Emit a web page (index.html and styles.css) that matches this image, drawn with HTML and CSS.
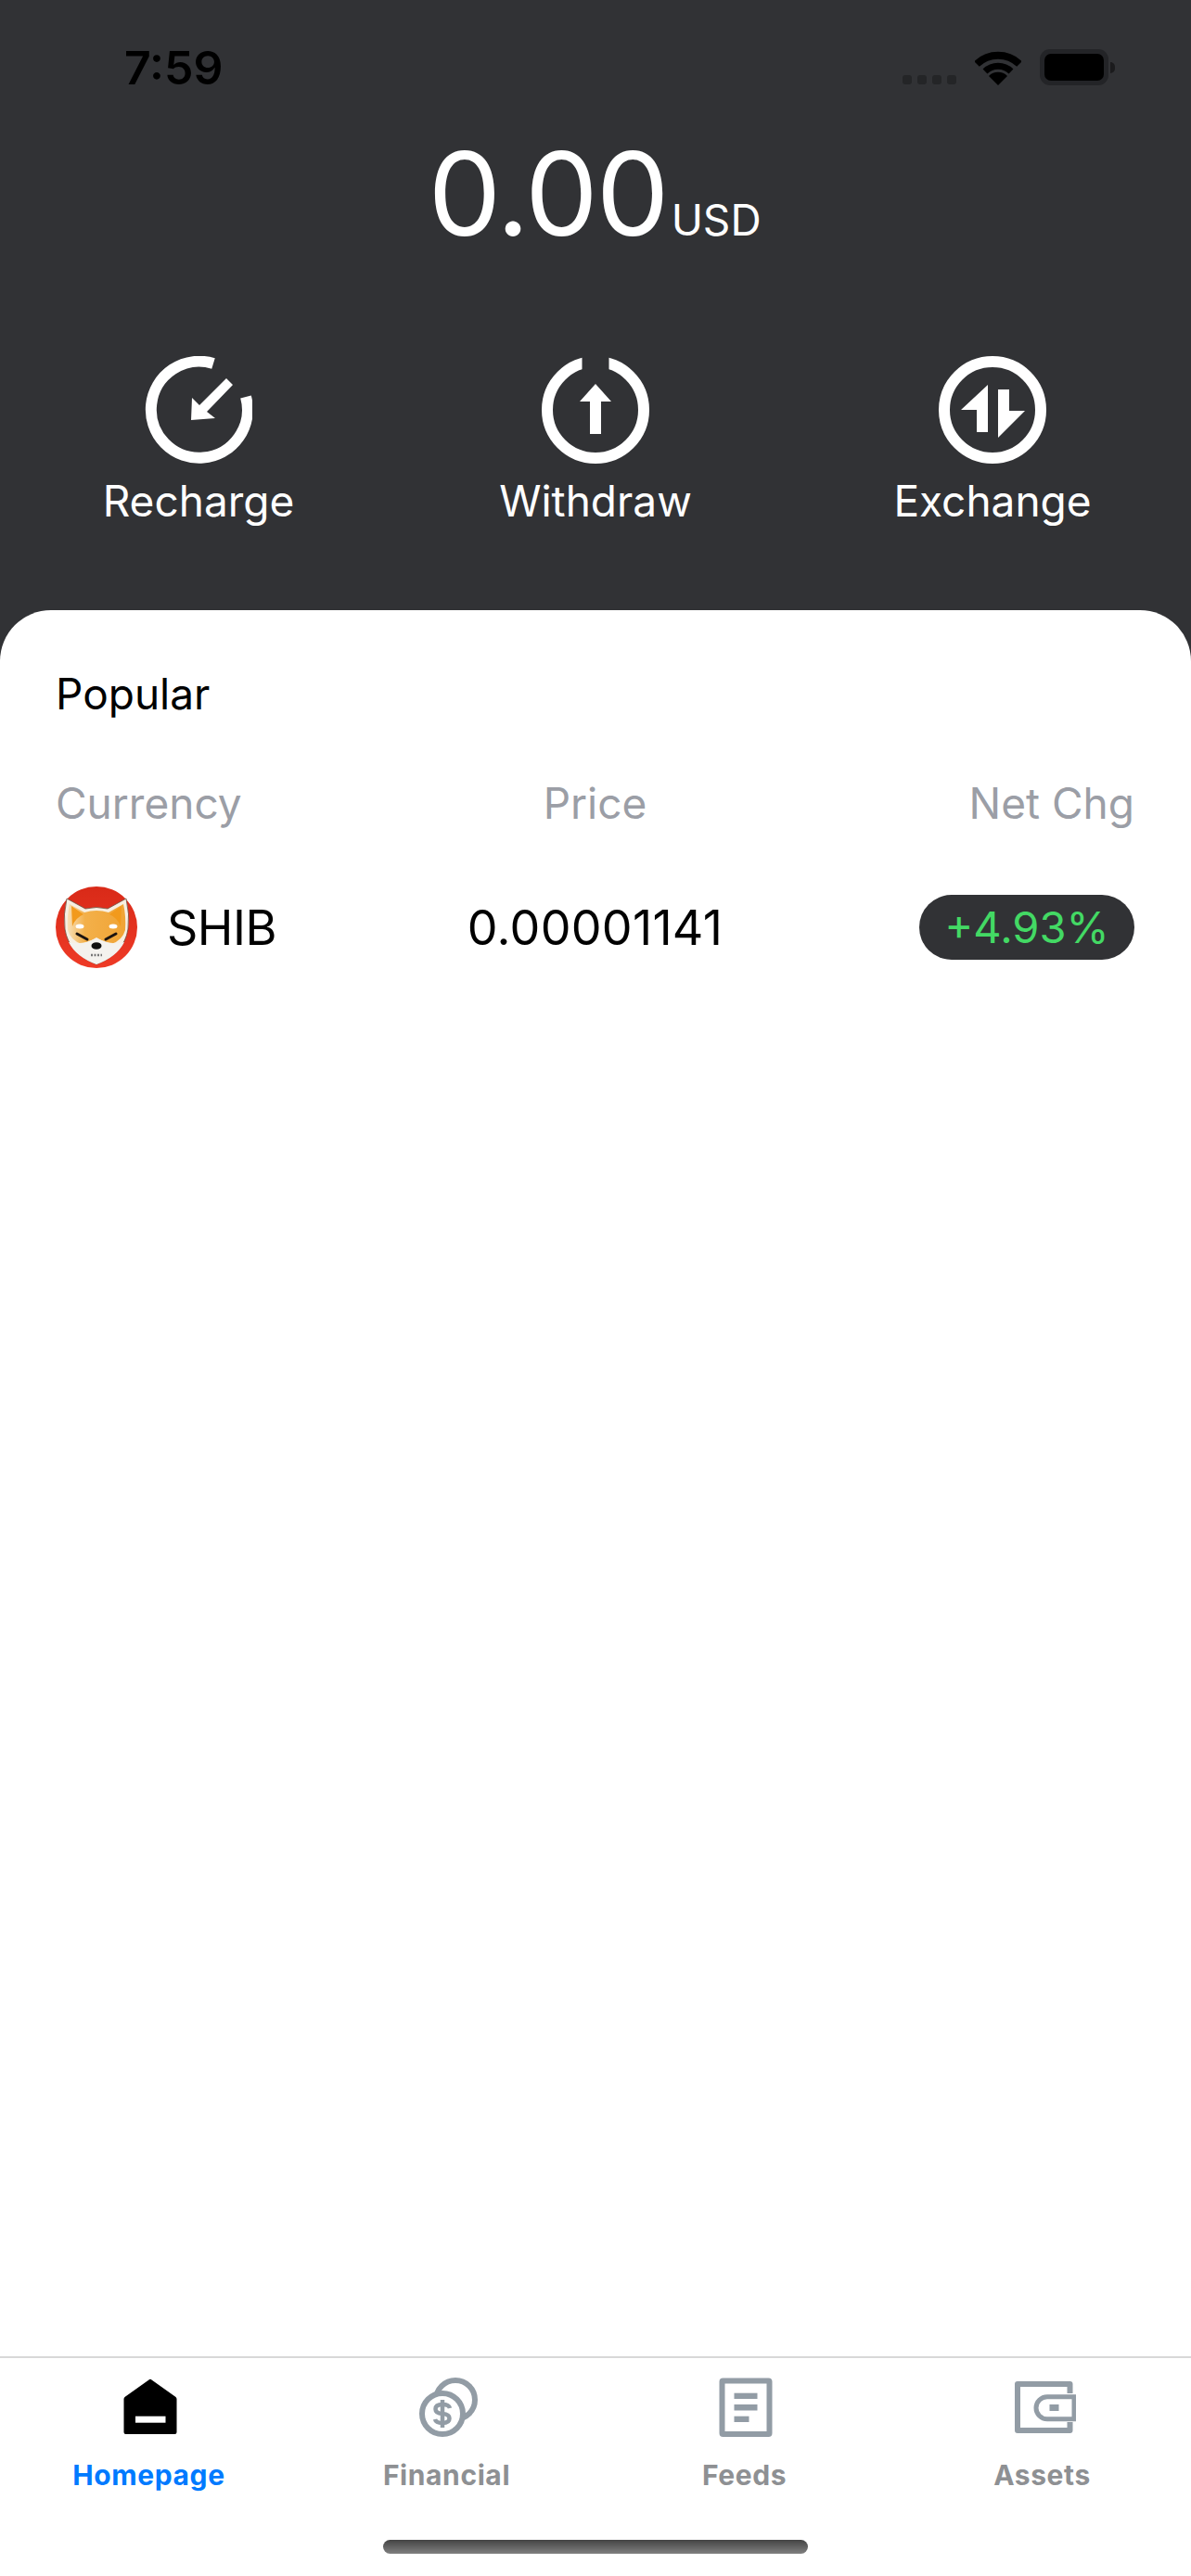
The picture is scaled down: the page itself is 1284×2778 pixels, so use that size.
FILE: index.html
```html
<!DOCTYPE html>
<html lang="en">
<head>
    <meta charset="UTF-8">
    <meta name="viewport" content="width=device-width, initial-scale=1.0">
    <link rel="stylesheet" href="styles.css">
    <title>Homepage</title>
</head>
<body>

    <div id="app">
        <div class="status-bar">
            <span class="time">7:59</span>
            <div class="status-icons">
                <div class="signal"><i></i><i></i><i></i><i></i></div>
                <svg class="wifi" width="50" height="37" viewBox="0 0 50 37">
                    <path d="M2 14A33 33 0 0 1 48 14" fill="none" stroke="#000" stroke-width="8"/>
                    <path d="M11 22A20 20 0 0 1 39 22" fill="none" stroke="#000" stroke-width="7"/>
                    <path d="M25 37L15 27A14 14 0 0 1 35 27Z" fill="#000"/>
                </svg>
                <div class="battery"><div class="battery-level"></div></div>
                <div class="battery-cap"></div>
            </div>
        </div>

        <div class="balance">
            <span class="amount">0.00</span><span class="unit">USD</span>
        </div>

        <div class="actions">
            <div class="action">
                <svg width="116" height="116" viewBox="0 0 116 116">
                    <path d="M109 44A52 52 0 1 1 74 8" fill="none" stroke="#fff" stroke-width="12"/>
                    <path d="M50 69L51 45L59 53L88 24L95 31L67 60L76 67Z" fill="#fff"/>
                </svg>
                <span>Recharge</span>
            </div>
            <div class="action">
                <svg width="116" height="116" viewBox="0 0 116 116">
                    <circle cx="58" cy="58" r="52" fill="none" stroke="#fff" stroke-width="12"/>
                    <rect x="43.5" y="0" width="29" height="20" fill="#313235"/>
                    <path d="M58 30L75 49H64V84H52V49H41Z" fill="#fff"/>
                </svg>
                <span>Withdraw</span>
            </div>
            <div class="action">
                <svg width="116" height="116" viewBox="0 0 116 116">
                    <circle cx="58" cy="58" r="52" fill="none" stroke="#fff" stroke-width="12"/>
                    <path d="M53 31V82H41V58H24Z" fill="#fff"/>
                    <path d="M64 36H76V59H93L64 88Z" fill="#fff"/>
                </svg>
                <span>Exchange</span>
            </div>
        </div>

        <div class="sheet">
            <div class="market">
                <h2>Popular</h2>
                <div class="market-head">
                    <span>Currency</span>
                    <span>Price</span>
                    <span>Net Chg</span>
                </div>
                <div class="market-row">
                    <div class="coin">
                        <svg width="88" height="88" viewBox="0 0 88 88">
                            <defs>
                                <linearGradient id="faceFill" x1="0" x2="1" y1="0" y2="0">
                                    <stop offset="0" stop-color="#f8e0b8"/>
                                    <stop offset="0.3" stop-color="#f3b04a"/>
                                    <stop offset="1" stop-color="#f0a435"/>
                                </linearGradient>
                                <linearGradient id="coinFill" x1="0" x2="0" y1="0" y2="1">
                                    <stop offset="0" stop-color="#d92a18"/>
                                    <stop offset="1" stop-color="#ee3a26"/>
                                </linearGradient>
                            </defs>
                            <circle cx="44" cy="44" r="44" fill="url(#coinFill)"/>
                            <path d="M12 13L32 24Q44 21 56 24L76 13Q80 30 78 46Q74 72 44 84Q14 72 10 46Q8 30 12 13Z" fill="#f7efe2" stroke="#6b5242" stroke-width="0.8"/>
                            <path d="M15 19L31 28Q44 24 57 28L73 19Q76 32 75 47Q72 58 60 62L44 56L28 62Q16 58 13 47Q12 32 15 19Z" fill="url(#faceFill)"/>
                            <path d="M14 60Q30 64 44 55Q58 64 74 60Q66 76 44 84Q22 76 14 60Z" fill="#f4f2ee"/>
                            <path d="M17 21L30 30Q21 34 18 43Z" fill="#f29a1c"/>
                            <path d="M71 21L58 30Q67 34 70 43Z" fill="#f29a1c"/>
                            <ellipse cx="26" cy="43" rx="4.500" ry="2.500" fill="#fff"/>
                            <ellipse cx="62" cy="43" rx="4.500" ry="2.500" fill="#fff"/>
                            <path d="M23 51L34 57" stroke="#1c1410" stroke-width="3" stroke-linecap="round"/>
                            <path d="M65 51L54 57" stroke="#1c1410" stroke-width="3" stroke-linecap="round"/>
                            <ellipse cx="44" cy="64" rx="5.500" ry="3.800" fill="#111"/>
                            <path d="M38 74H50" stroke="#777" stroke-width="2.500" stroke-dasharray="2 1.500"/>
                        </svg>
                        <span class="coin-name">SHIB</span>
                    </div>
                    <div class="price">0.00001141</div>
                    <div class="change-cell"><span class="change">+4.93%</span></div>
                </div>
            </div>

            <div class="tab-bar">
                <div class="tab active">
                    <svg width="72" height="72" viewBox="0 0 72 72">
                        <path d="M35.500 6.500a2 2 0 0 1 3 0L64.500 25a3 3 0 0 1 1 2V63a2 2 0 0 1-2 2H10.500a2 2 0 0 1-2-2V27a3 3 0 0 1 1-2Z" fill="#000"/>
                        <rect x="21" y="45.700" width="32.500" height="7" fill="#fff"/>
                    </svg>
                    <span>Homepage</span>
                </div>
                <div class="tab">
                    <svg width="72" height="72" viewBox="0 0 72 72">
                        <circle cx="45" cy="28" r="21" fill="none" stroke="#929ca5" stroke-width="6"/>
                        <circle cx="31" cy="43" r="22" fill="#fff" stroke="#929ca5" stroke-width="6"/>
                        <path d="M39 37Q38 33 31 33Q23.500 33 23.500 38Q23.500 42.500 31 43Q38.500 43.500 38.500 48Q38.500 53 31 53Q24 53 23 49" fill="none" stroke="#929ca5" stroke-width="4.500"/>
                        <path d="M31 28V58" stroke="#929ca5" stroke-width="4.500"/>
                    </svg>
                    <span>Financial</span>
                </div>
                <div class="tab">
                    <svg width="72" height="72" viewBox="0 0 72 72">
                        <rect x="11.500" y="7.500" width="51" height="57.500" rx="1" fill="none" stroke="#929ca5" stroke-width="6"/>
                        <rect x="24.500" y="20.700" width="25" height="6.300" fill="#929ca5"/>
                        <rect x="24.500" y="33" width="25" height="6.500" fill="#929ca5"/>
                        <rect x="24.500" y="45.700" width="16" height="6.300" fill="#929ca5"/>
                    </svg>
                    <span>Feeds</span>
                </div>
                <div class="tab">
                    <svg width="72" height="72" viewBox="0 0 72 72">
                        <path d="M65.500 21V11H9V61H65.500V52" fill="none" stroke="#929ca5" stroke-width="6" stroke-linejoin="round"/>
                        <path d="M70 24.700H41A12 12 0 0 0 41 48.700H70Z" fill="none" stroke="#929ca5" stroke-width="5"/>
                        <rect x="43.500" y="33" width="10" height="7" fill="#929ca5"/>
                    </svg>
                    <span>Assets</span>
                </div>
            </div>
            <div class="home-indicator"></div>
        </div>
    </div>

</body>
</html>
```

FILE: styles.css
```css
html, body {
    margin: 0;
    padding: 0;
}

body {
    font-family: 'Inter', 'Liberation Sans', sans-serif;
    background-color: #fff;
}

#app {
    width: 1284px;
    height: 2778px;
    display: flex;
    flex-direction: column;
    background-color: #313235;
    overflow: hidden;
}

.status-bar {
    display: flex;
    justify-content: space-between;
    align-items: flex-start;
    height: 135px;
    padding: 43px 82px 0 134px;
    box-sizing: border-box;
}

.time {
    font-size: 50px;
    line-height: 60px;
    font-weight: 600;
    color: #000;
}

.status-icons {
    display: flex;
    align-items: flex-end;
    padding-top: 10px;
}

.signal {
    display: flex;
    gap: 6px;
    margin-right: 20px;
    margin-bottom: 1px;
}

.signal i {
    display: block;
    width: 10px;
    height: 10px;
    border-radius: 3px;
    background-color: #242527;
}

.battery {
    width: 74px;
    height: 39px;
    margin-left: 20px;
    box-sizing: border-box;
    padding: 5px;
    border-radius: 11px;
    background-color: #232427;
}

.battery-level {
    height: 100%;
    border-radius: 7px;
    background-color: #000;
}

.battery-cap {
    width: 5px;
    height: 12px;
    margin: 0 0 13px 2px;
    border-radius: 0 6px 6px 0;
    background-color: #1b1b1d;
}

.balance {
    display: flex;
    justify-content: center;
    align-items: baseline;
    height: 148px;
    margin-right: 2px;
    color: #fff;
}

.amount {
    font-size: 125px;
    line-height: 148px;
    letter-spacing: -2px;
}

.unit {
    font-size: 46px;
    margin-left: 4px;
}

.actions {
    display: grid;
    grid-template-columns: repeat(3, 1fr);
    margin-top: 101px;
}

.action {
    display: flex;
    flex-direction: column;
    align-items: center;
    color: #fff;
    font-size: 46px;
    line-height: 54px;
}

.action span {
    margin-top: 13px;
}

.sheet {
    flex: 1;
    display: flex;
    flex-direction: column;
    margin-top: 91px;
    background-color: #fff;
    border-radius: 55px 55px 0 0;
}

.market {
    flex: 1;
    padding: 62px 61px 0 60px;
}

.market h2 {
    margin: 0;
    font-size: 46px;
    line-height: 56px;
    font-weight: 400;
    color: #000;
}

.market-head {
    display: grid;
    grid-template-columns: 1fr 1fr 1fr;
    margin-top: 62px;
    font-size: 46px;
    line-height: 56px;
    color: #9b9ea6;
}

.market-head span:nth-child(2) {
    text-align: center;
}

.market-head span:nth-child(3) {
    text-align: right;
}

.market-row {
    display: grid;
    grid-template-columns: 1fr 1fr 1fr;
    align-items: center;
    margin-top: 62px;
    font-size: 52px;
    color: #000;
}

.coin {
    display: flex;
    align-items: center;
    gap: 32px;
}

.coin svg {
    display: block;
}

.coin-name {
    letter-spacing: -0.5px;
}

.price {
    text-align: center;
    white-space: nowrap;
    letter-spacing: 0.3px;
}

.change-cell {
    display: flex;
    justify-content: flex-end;
}

.change {
    display: block;
    width: 232px;
    height: 70px;
    border-radius: 35px;
    background-color: #313235;
    color: #43d964;
    font-size: 47px;
    line-height: 70px;
    text-align: center;
}

.tab-bar {
    display: grid;
    grid-template-columns: repeat(4, 1fr);
    height: 151px;
    padding-top: 17px;
    border-top: 2px solid #d8d8d8;
}

.tab {
    display: flex;
    flex-direction: column;
    align-items: center;
    color: #8e9093;
    font-size: 30px;
    line-height: 36px;
    font-weight: 700;
    letter-spacing: 0.6px;
}

.tab.active {
    color: #007aff;
}

.tab svg {
    display: block;
    margin-bottom: 19px;
}

.home-indicator {
    width: 458px;
    height: 15px;
    margin: 28px auto 24px;
    border-radius: 8px;
    background: linear-gradient(#444, #808080);
}
```
